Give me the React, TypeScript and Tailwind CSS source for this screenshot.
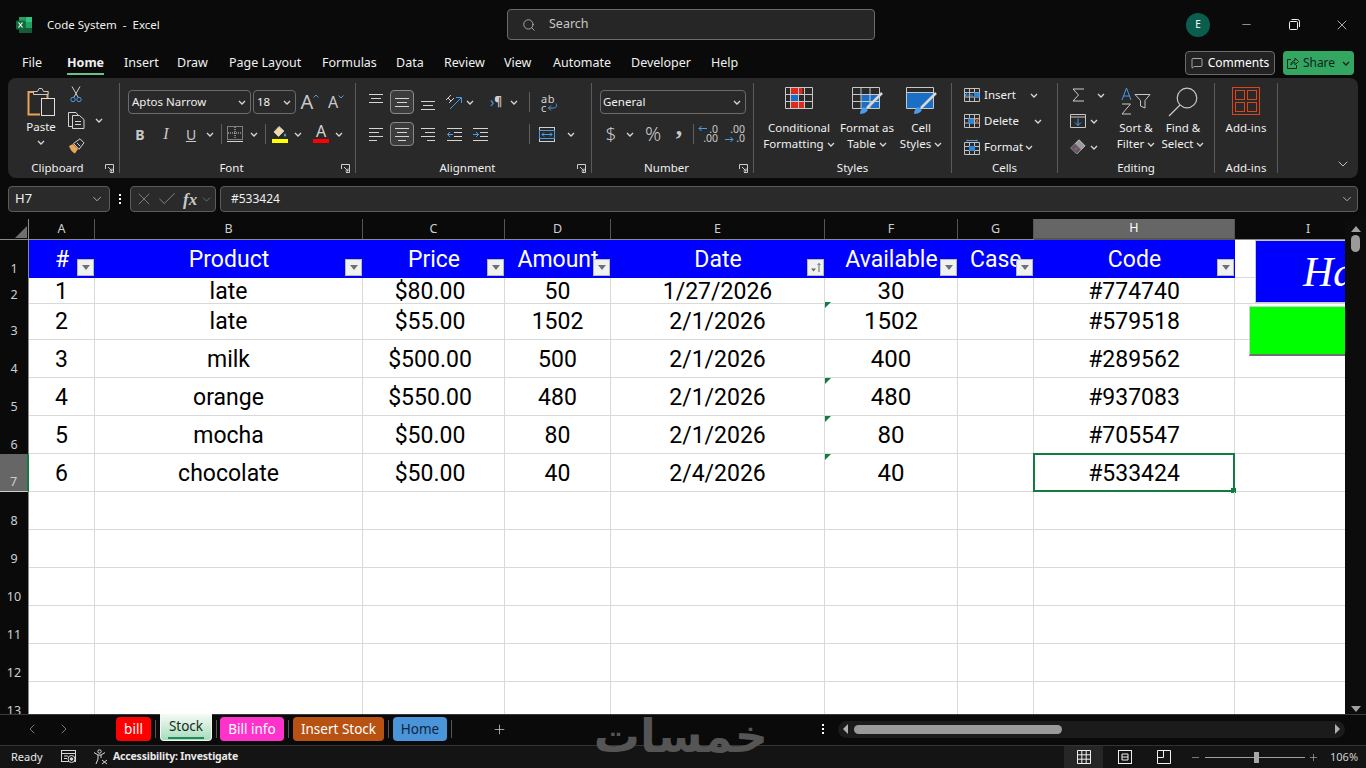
import React from 'react';
import { Search, Minus, X, Plus, ChevronLeft, ChevronRight, ChevronDown, MessageSquare, Check } from 'lucide-react';

const Chev = ({ className = 'text-[#d8d8d8]' }: { className?: string }) => (
  <svg width="8" height="5" viewBox="0 0 8 5" className={className} fill="none" stroke="currentColor" strokeWidth="1.3">
    <path d="M1 1l3 3 3-3" />
  </svg>
);

const Slot = ({ w, children, className = '' }: { w: string; children?: React.ReactNode; className?: string }) => (
  <div className={`${w} h-6 flex-none flex items-center justify-center ${className}`}>{children}</div>
);

const Sep = () => <div className="w-px h-[20px] bg-[#5f5f5f]" />;
const GroupDivider = () => <div className="w-px my-[5px] bg-[#5a5a5a] flex-none" />;

const Launcher = () => (
  <svg width="9" height="9" viewBox="0 0 9 9" fill="none" stroke="#cfcfcf" className="absolute right-[5px] bottom-[5px]">
    <path d="M.5 5V.5H8.5V8.5H5M3 3l4 4M7 4.5V7H4.5" />
  </svg>
);

const Group = ({ w, label, launcher, children }: { w: string; label: string; launcher?: boolean; children: React.ReactNode }) => (
  <div className={`${w} relative flex-none flex flex-col h-full`}>
    <div className="h-[80px] flex-none">{children}</div>
    <div className={`h-[20px] flex items-center justify-center text-[11.5px] text-[#f0f0f0] ${launcher ? 'pr-[12px]' : ''}`}>{label}</div>
    {launcher && <Launcher />}
  </div>
);

const Lines = ({ rows, className = '' }: { rows: [number, number][]; className?: string }) => (
  <svg width="16" height="14" viewBox="0 0 16 14" fill="none" stroke="#d4d4d4" className={className}>
    {rows.map(([a, b], i) => (
      <path key={i} d={`M${a} ${1.5 + i * 4}H${b}`} />
    ))}
  </svg>
);

const ExcelIcon = () => (
  <svg width="16" height="16" viewBox="0 0 16 16">
    <rect x="3" y="0" width="6.5" height="5" fill="#21a366" />
    <rect x="9.5" y="0" width="6.5" height="5" fill="#33c481" />
    <rect x="3" y="5" width="6.5" height="6" fill="#107c41" />
    <rect x="9.5" y="5" width="6.5" height="6" fill="#21a366" />
    <rect x="3" y="11" width="13" height="5" fill="#185c37" />
    <rect x="0" y="3.5" width="9" height="9" rx="1" fill="#0f6b3a" />
    <path d="M2.5 5.5l4 5M6.5 5.5l-4 5" stroke="#fff" strokeWidth="1.2" />
  </svg>
);

const PasteIcon = () => (
  <svg width="28" height="31" viewBox="0 0 28 31" fill="none">
    <path d="M8.5 5H1.5V27.5H13" stroke="#e8a657" strokeWidth="2" />
    <path d="M19 5h1.5V11" stroke="#e8a657" strokeWidth="2" />
    <path d="M6.5 7.5V4.5H10.5L12 1.5H15L16.5 4.5H21V7.5Z" stroke="#c9c9c9" fill="#292929" />
    <rect x="14.5" y="11.5" width="13" height="17" fill="#292929" stroke="#e0e0e0" />
  </svg>
);

const CutIcon = () => (
  <svg width="12" height="17" viewBox="0 0 12 17" fill="none">
    <path d="M2 .5L8 11M10 .5L4 11" stroke="#cfcfcf" />
    <circle cx="3" cy="13.5" r="2.2" stroke="#4a9be8" />
    <circle cx="9" cy="13.5" r="2.2" stroke="#4a9be8" />
  </svg>
);

const CopyIcon = () => (
  <svg width="17" height="17" viewBox="0 0 17 17" fill="none" stroke="#d4d4d4">
    <path d="M5 14.5H.5V.5H8L10 3" />
    <path d="M4.5 3.5H11.5L16 7.5V16.5H4.5Z" fill="#292929" />
    <path d="M7 9.5h6M7 12.5h6" />
  </svg>
);

const BrushIcon = () => (
  <svg width="17" height="16" viewBox="0 0 17 16" fill="none">
    <path d="M1 8l4-2 5 5-3 4.5C4 14.5 2 11 1 8Z" fill="#e8a657" />
    <path d="M5.5 5.5L12 .8l4 4-5 6.5Z" fill="#292929" stroke="#d4d4d4" />
    <path d="M9 5l3 3" stroke="#d4d4d4" />
  </svg>
);

const GrowA = ({ up }: { up?: boolean }) => (
  <div className="relative flex items-end leading-none text-[#c8c8c8]">
    <span className={up ? 'text-[20px] leading-none' : 'text-[16px] leading-none'}>A</span>
    <svg width="6" height="4" viewBox="0 0 6 4" fill="none" stroke="#4a9be8" className={up ? 'mb-[14px]' : 'mb-[11px]'}>
      <path d={up ? 'M.5 3.5L3 1l2.5 2.5' : 'M.5 .5L3 3l2.5-2.5'} />
    </svg>
  </div>
);

const BorderIcon = () => (
  <svg width="16" height="16" viewBox="0 0 16 16" fill="none" stroke="#d4d4d4">
    <path d="M.5 .5H15.5V13.5H.5Z" strokeDasharray="1 1" />
    <path d="M8 1V13M1 7H15" strokeDasharray="1 1" />
    <path d="M0 15.5H16" />
  </svg>
);

const FillIcon = () => (
  <div className="flex flex-col items-center">
    <svg width="14" height="12" viewBox="0 0 14 12" fill="none">
      <path d="M6 .5L1 6l4.5 4.5L11 5Z" fill="#f3d9a4" stroke="#c8c8c8" />
      <path d="M12 7c1 1.5 1.5 2 1 3-.5.8-1.5.8-2 0-.4-1 .3-1.8 1-3Z" fill="#4a9be8" />
    </svg>
    <div className="w-4 h-[4px] mt-[1px] bg-[#ffff00]" />
  </div>
);

const FontColorIcon = () => (
  <div className="flex flex-col items-center">
    <span className="text-[16px] leading-[13px] text-[#d4d4d4]">A</span>
    <div className="w-4 h-[4px] mt-[1px] bg-[#ff0000]" />
  </div>
);

const OrientIcon = () => (
  <svg width="18" height="16" viewBox="0 0 18 16" fill="none">
    <path d="M1 6l5-5M4 9l5-5M3 4l3 3" stroke="#cfcfcf" />
    <path d="M5 15L16 4M11 3.5h5.5V9" stroke="#4a9be8" />
  </svg>
);

const IndentIcon = ({ out }: { out?: boolean }) => (
  <svg width="15" height="13" viewBox="0 0 15 13" fill="none">
    <path d="M7 4.5H15M7 8.5H15" stroke="#d4d4d4" />
    <path d="M0 12.5H15M0 .5H15" stroke="#d4d4d4" />
    <path d={out ? 'M6 6.5H.5M3 4L.5 6.5 3 9' : 'M0 6.5H5.5M3 4l2.5 2.5L3 9'} stroke="#4a9be8" />
  </svg>
);

const RtlIcon = () => (
  <div className="flex items-center text-[14px] leading-none">
    <span className="text-[#4a9be8]">›</span>
    <span className="text-[#cfcfcf] font-bold text-[12px]">¶</span>
  </div>
);

const WrapIcon = () => (
  <div className="relative w-[16px] h-[17px] text-[#d4d4d4] text-[11px] leading-[9px]">
    <div className="tracking-[0.5px]">ab</div>
    <div>c</div>
    <svg width="11" height="8" viewBox="0 0 11 8" fill="none" stroke="#4a9be8" className="absolute right-[-1px] bottom-0">
      <path d="M9 .5C10.5 3 9 5 6.5 5H1.5M4 2.5L1.5 5 4 7.5" />
    </svg>
  </div>
);

const MergeIcon = () => (
  <svg width="16" height="15" viewBox="0 0 16 15" fill="none">
    <rect x=".5" y=".5" width="15" height="14" stroke="#cfcfcf" />
    <rect x=".5" y="3.5" width="15" height="8" stroke="#4a9be8" />
    <path d="M3 7.5H13M5 5.5l-2 2 2 2M11 5.5l2 2-2 2" stroke="#4a9be8" />
  </svg>
);

const DecimalIcon = ({ more }: { more?: boolean }) => (
  <div className="relative w-[20px] h-[18px] text-[#c8c8c8] text-[10.5px] leading-[9px] text-right">
    <div>{more ? '.00' : '.0'}</div>
    <div>{more ? '.0' : '.00'}</div>
    <svg width="9" height="7" viewBox="0 0 9 7" fill="none" stroke="#4a9be8" className={`absolute left-0 ${more ? 'bottom-0' : 'top-0'}`}>
      {more ? <path d="M0 3.5H8M5.5 1L8 3.5 5.5 6" /> : <path d="M9 3.5H1M3.5 1L1 3.5 3.5 6" />}
    </svg>
  </div>
);

const CondIcon = () => (
  <svg width="28" height="23" viewBox="0 0 28 23" fill="none">
    <rect x="5.5" y=".5" width="12" height="7" fill="#dc2a1e" />
    <rect x="5.5" y="7.5" width="8" height="7" fill="#1a6fc4" />
    <rect x="5.5" y="14.5" width="14" height="7" fill="#dc2a1e" />
    <path d="M.5 .5H27.5V21.5H.5ZM.5 7.5H27.5M.5 14.5H27.5M5.5 .5V21.5M13.5 .5V21.5M19.5 .5V21.5" stroke="#c8c8c8" />
  </svg>
);

const TableIcon = () => (
  <svg width="31" height="28" viewBox="0 0 31 28" fill="none">
    <rect x="9" y="8" width="18" height="13" fill="#1a6fc4" />
    <path d="M.5 .5H27.5V21.5H.5ZM.5 7.5H27.5M.5 14.5H27.5M9 .5V21.5M18 .5V21.5" stroke="#c8c8c8" />
    <path d="M30 6L15 21" stroke="#d8d8d8" strokeWidth="2.5" />
    <path d="M8 27c0-4 2-6 4-7l4 3c-2 3-5 4-8 4Z" fill="#4a9be8" />
  </svg>
);

const CellStyleIcon = () => (
  <svg width="31" height="28" viewBox="0 0 31 28" fill="none">
    <rect x="1" y="6" width="26" height="15" fill="#1a6fc4" />
    <path d="M.5 .5H27.5V21.5H.5ZM.5 5.5H27.5" stroke="#c8c8c8" />
    <path d="M30 6L15 21" stroke="#d8d8d8" strokeWidth="2.5" />
    <path d="M8 27c0-4 2-6 4-7l4 3c-2 3-5 4-8 4Z" fill="#4a9be8" />
  </svg>
);

const GridCells = () => <path d="M.5 .5H15.5V13.5H.5ZM.5 4.5H15.5M.5 9H15.5M5.5 .5V13.5M10.5 .5V13.5" stroke="#c0c0c0" />;

const InsertIcon = () => (
  <svg width="16" height="14" viewBox="0 0 16 14" fill="none">
    <GridCells />
    <rect x="10" y="4.5" width="5.5" height="5" fill="#2a86d8" />
    <path d="M9 7H1M3.5 4.5L1 7l2.5 2.5" stroke="#4a9be8" />
  </svg>
);

const DeleteIcon = () => (
  <svg width="16" height="14" viewBox="0 0 16 14" fill="none">
    <GridCells />
    <rect x="4" y="4.5" width="6" height="5" fill="#2a86d8" />
    <path d="M11 4.5l4 5M15 4.5l-4 5" stroke="#d0602c" strokeWidth="1.2" />
  </svg>
);

const FormatIcon = () => (
  <svg width="16" height="16" viewBox="0 0 16 16" fill="none">
    <path d="M.5 3.5H15.5V15.5H.5ZM.5 7.5H15.5M.5 11.5H15.5M5.5 3.5V15.5M10.5 3.5V15.5" stroke="#c0c0c0" />
    <rect x="5" y="7" width="6" height="5" fill="#2a86d8" />
    <path d="M3 .5V2.5M13 .5V2.5M3 1.5H13" stroke="#4a9be8" />
  </svg>
);

const SigmaIcon = () => (
  <svg width="13" height="14" viewBox="0 0 13 14" fill="none" stroke="#cfcfcf">
    <path d="M12 1H1l5.5 6L1 13h11" />
  </svg>
);

const FillDownIcon = () => (
  <svg width="16" height="14" viewBox="0 0 16 14" fill="none">
    <path d="M.5 .5H15.5V13.5H.5ZM.5 3H15.5" stroke="#c8c8c8" />
    <path d="M8 4.5V11.5M5 8.5l3 3 3-3" stroke="#4a9be8" />
  </svg>
);

const ClearIcon = () => (
  <svg width="16" height="16" viewBox="0 0 16 16" fill="none">
    <path d="M.8 9L9 .8 15 6.8 6.8 15Z" fill="#9a9a9a" stroke="#c8c8c8" />
    <path d="M.8 9L5 4.8 11 10.8 6.8 15Z" fill="#5c5c5c" />
    <circle cx="6" cy="10" r="1.4" fill="#c23ea0" />
  </svg>
);

const SortIcon = () => (
  <svg width="30" height="28" viewBox="0 0 30 28" fill="none">
    <path d="M14 7.5H29L24 13.5V21L19.5 19V13.5Z" stroke="#c8c8c8" />
    <path d="M1 13L5.5 1 10 13M2.5 9H8.5" stroke="#4a9be8" />
    <path d="M1 17H9.5L1 27H10" stroke="#c8c8c8" />
  </svg>
);

const FindIcon = () => (
  <svg width="30" height="30" viewBox="0 0 30 30" fill="none" stroke="#c8c8c8" strokeWidth="1.2">
    <circle cx="19" cy="11" r="9.8" />
    <path d="M12 18L1 29" />
  </svg>
);

const AddinsIcon = () => (
  <svg width="28" height="28" viewBox="0 0 28 28" fill="none" stroke="#d8451f">
    <rect x=".5" y=".5" width="27" height="27" />
    <rect x="3.5" y="3.5" width="9" height="9" />
    <rect x="15.5" y="3.5" width="9" height="9" />
    <rect x="3.5" y="15.5" width="9" height="9" />
    <rect x="15.5" y="15.5" width="9" height="9" />
  </svg>
);

const SmallRow = ({ children }: { children: React.ReactNode }) => <div className="h-[26px] flex items-center text-[11.5px] text-[#f0f0f0]">{children}</div>;

const BigButton = ({ w, icon, lines }: { w: string; icon: React.ReactNode; lines: React.ReactNode[] }) => (
  <div className={`${w} flex-none flex flex-col items-center text-[11.5px] leading-[16px] text-[#f0f0f0]`}>
    <div className="h-[31px] mt-[9px] flex items-start justify-center">{icon}</div>
    <div className="mt-[2px] flex flex-col items-center whitespace-nowrap">
      {lines.map((l, i) => (
        <div key={i} className="flex items-center gap-[3px]">{l}</div>
      ))}
    </div>
  </div>
);

const Ribbon = () => (
  <div className="mx-2 h-[100px] flex-none flex rounded-lg bg-[#292929]">
    <Group w="w-[111px]" label="Clipboard" launcher>
      <div className="flex pl-3">
        <div className="w-[42px] flex flex-col items-center text-[11.5px] text-[#f0f0f0]">
          <div className="mt-[9px] h-[31px]"><PasteIcon /></div>
          <div className="leading-[16px] mt-[1px]">Paste</div>
          <div className="mt-[5px]"><Chev /></div>
        </div>
        <div className="ml-1 mt-[3px] flex flex-col">
          <SmallRow><Slot w="w-5"><CutIcon /></Slot></SmallRow>
          <SmallRow><Slot w="w-5"><CopyIcon /></Slot><Slot w="w-[26px]"><Chev /></Slot></SmallRow>
          <SmallRow><Slot w="w-5"><BrushIcon /></Slot></SmallRow>
        </div>
      </div>
    </Group>
    <GroupDivider />
    <Group w="w-[235px]" label="Font" launcher>
      <div className="pl-2 pt-3 flex flex-col gap-2">
        <div className="flex items-center gap-[2px]">
          <div className="w-[123px] h-6 flex items-center justify-between px-[3px] pr-[4px] rounded border border-[#6b6b6b] text-[11.5px] text-[#f0f0f0]">
            <span>Aptos Narrow</span><Chev />
          </div>
          <div className="w-[43px] h-6 flex items-center justify-between px-[3px] pr-[4px] rounded border border-[#6b6b6b] text-[11.5px] text-[#f0f0f0]">
            <span>18</span><Chev />
          </div>
          <Slot w="w-6"><GrowA up /></Slot>
          <Slot w="w-6"><GrowA /></Slot>
        </div>
        <div className="flex items-center">
          <Slot w="w-6"><span className="text-[14px] font-bold text-[#c8c8c8]">B</span></Slot>
          <Slot w="w-7"><span className="text-[16px] italic text-[#c8c8c8] font-['Liberation_Serif',serif]">I</span></Slot>
          <Slot w="w-[22px]"><span className="text-[14px] underline text-[#c8c8c8]">U</span></Slot>
          <Slot w="w-4"><Chev /></Slot>
          <Slot w="w-[6px]"><Sep /></Slot>
          <Slot w="w-[22px]"><BorderIcon /></Slot>
          <Slot w="w-4"><Chev /></Slot>
          <Slot w="w-[6px]"><Sep /></Slot>
          <Slot w="w-6"><FillIcon /></Slot>
          <Slot w="w-3"><Chev /></Slot>
          <Slot w="w-[6px]" />
          <Slot w="w-[22px]"><FontColorIcon /></Slot>
          <Slot w="w-[14px]"><Chev /></Slot>
        </div>
      </div>
    </Group>
    <GroupDivider />
    <Group w="w-[235px]" label="Alignment" launcher>
      <div className="pl-[10px] pt-3 flex flex-col gap-2">
        <div className="flex items-center">
          <Slot w="w-5"><Lines rows={[[1, 15], [3, 13], [1, 15]]} className="-translate-y-[2px]" /></Slot>
          <Slot w="w-1" />
          <Slot w="w-6" className="rounded border border-[#8a8a8a] bg-[#3c3c3c]"><Lines rows={[[1, 15], [3, 13], [1, 15]]} className="translate-y-[2px]" /></Slot>
          <Slot w="w-7"><Lines rows={[[1, 15], [3, 13], [1, 15]]} className="translate-y-[5px]" /></Slot>
          <Slot w="w-6"><OrientIcon /></Slot>
          <Slot w="w-2"><Chev /></Slot>
          <Slot w="w-[10px]" />
          <Slot w="w-6"><RtlIcon /></Slot>
          <Slot w="w-3"><Chev /></Slot>
          <Slot w="w-[18px]"><Sep /></Slot>
          <Slot w="w-[22px]"><WrapIcon /></Slot>
        </div>
        <div className="flex items-center">
          <Slot w="w-5"><Lines rows={[[1, 15], [1, 11], [1, 15], [1, 9]]} /></Slot>
          <Slot w="w-1" />
          <Slot w="w-6" className="rounded border border-[#8a8a8a] bg-[#3c3c3c]"><Lines rows={[[1, 15], [3, 13], [1, 15], [4, 12]]} /></Slot>
          <Slot w="w-7"><Lines rows={[[1, 15], [5, 15], [1, 15], [7, 15]]} /></Slot>
          <Slot w="w-6"><IndentIcon out /></Slot>
          <Slot w="w-[2px]" />
          <Slot w="w-6"><IndentIcon /></Slot>
          <Slot w="w-7" />
          <Slot w="w-[18px]"><Sep /></Slot>
          <Slot w="w-[18px]"><MergeIcon /></Slot>
          <Slot w="w-2" />
          <Slot w="w-[14px]"><Chev /></Slot>
        </div>
      </div>
    </Group>
    <GroupDivider />
    <Group w="w-[161px]" label="Number" launcher>
      <div className="pl-2 pt-3 flex flex-col gap-2">
        <div className="w-[146px] h-6 flex items-center justify-between px-[2px] pr-[4px] rounded border border-[#6b6b6b] text-[11.5px] text-[#f0f0f0]">
          <span>General</span><Chev />
        </div>
        <div className="flex items-center text-[#c8c8c8]">
          <Slot w="w-[22px]"><span className="text-[19px] font-light">$</span></Slot>
          <Slot w="w-4"><Chev /></Slot>
          <Slot w="w-[30px]"><span className="text-[20px] font-light">%</span></Slot>
          <Slot w="w-[22px]"><span className="text-[26px] font-bold leading-none -mt-[14px] font-['Liberation_Serif',serif]">,</span></Slot>
          <Slot w="w-[6px]"><Sep /></Slot>
          <Slot w="w-6"><DecimalIcon /></Slot>
          <Slot w="w-[3px]" />
          <Slot w="w-6"><DecimalIcon more /></Slot>
        </div>
      </div>
    </Group>
    <GroupDivider />
    <Group w="w-[197px]" label="Styles">
      <div className="pl-3 flex">
        <BigButton w="w-[66px]" icon={<CondIcon />} lines={['Conditional', <>Formatting <Chev /></>]} />
        <div className="w-[2px]" />
        <BigButton w="w-[66px]" icon={<TableIcon />} lines={['Format as', <>Table <Chev /></>]} />
        <BigButton w="w-[42px]" icon={<CellStyleIcon />} lines={['Cell', <>Styles <Chev /></>]} />
      </div>
    </Group>
    <GroupDivider />
    <Group w="w-[105px]" label="Cells">
      <div className="pl-3 pt-1">
        <SmallRow><InsertIcon /><span className="ml-1 w-[46px]">Insert</span><Chev /></SmallRow>
        <SmallRow><DeleteIcon /><span className="ml-1 w-[50px]">Delete</span><Chev /></SmallRow>
        <SmallRow><FormatIcon /><span className="ml-1 w-[41px]">Format</span><Chev /></SmallRow>
      </div>
    </Group>
    <GroupDivider />
    <Group w="w-[156px]" label="Editing">
      <div className="pl-[10px] flex">
        <div className="pt-1 w-11 flex-none">
          <SmallRow><Slot w="w-5"><SigmaIcon /></Slot><Slot w="w-[26px]"><Chev /></Slot></SmallRow>
          <SmallRow><Slot w="w-5"><FillDownIcon /></Slot><Slot w="w-3"><Chev /></Slot></SmallRow>
          <SmallRow><Slot w="w-5"><ClearIcon /></Slot><Slot w="w-3"><Chev /></Slot></SmallRow>
        </div>
        <BigButton w="w-12" icon={<SortIcon />} lines={['Sort &', <>Filter <Chev /></>]} />
        <BigButton w="w-[46px]" icon={<FindIcon />} lines={['Find &', <>Select <Chev /></>]} />
      </div>
    </Group>
    <GroupDivider />
    <Group w="w-[62px]" label="Add-ins">
      <BigButton w="w-full" icon={<AddinsIcon />} lines={['Add-ins']} />
    </Group>
    <GroupDivider />
    <div className="flex-1 flex justify-end items-end pr-[7px] pb-[6px]">
      <ChevronDown size={16} strokeWidth={1.3} className="text-[#d8d8d8]" />
    </div>
  </div>
);

const FormulaBar = () => (
  <div className="mt-2 mx-2 h-[26px] flex-none flex items-center text-[12px] text-[#f0f0f0]">
    <div className="w-[102px] h-full flex items-center justify-between pl-[6px] pr-[5px] rounded border border-[#5c5c5c] bg-[#2a2a2a]">
      <span className="text-[13px]">H7</span>
      <ChevronDown size={14} strokeWidth={1.4} className="text-[#c8c8c8]" />
    </div>
    <div className="w-5 flex flex-col items-center gap-[2px]">
      <div className="w-[2px] h-[2px] bg-white" />
      <div className="w-[2px] h-[2px] bg-white" />
      <div className="w-[2px] h-[2px] bg-white" />
    </div>
    <div className="w-[86px] h-full flex items-center pl-[3px] rounded border border-[#5c5c5c] bg-[#2a2a2a] text-[#8c8c8c]">
      <X size={20} strokeWidth={1} />
      <Check size={22} strokeWidth={1} className="ml-[2px]" />
      <span className="ml-[5px] w-[16px] italic font-bold text-[17px] leading-none text-[#c8c8c8] font-['Liberation_Serif',serif]">fx</span>
      <ChevronDown size={13} strokeWidth={1.2} className="ml-[1px]" />
    </div>
    <div className="ml-1 flex-1 h-full flex items-center justify-between pl-[10px] pr-[3px] rounded border border-[#5c5c5c] bg-[#2a2a2a]">
      <span>#533424</span>
      <ChevronDown size={14} strokeWidth={1.4} className="text-[#c8c8c8]" />
    </div>
  </div>
);

const colGrid = 'grid grid-cols-[29px_66px_268px_142px_106px_214px_133px_76px_201px_110px]';
const cols = ['A', 'B', 'C', 'D', 'E', 'F', 'G', 'H', 'I'];
const headers = ['#', 'Product', 'Price', 'Amount', 'Date', 'Available', 'Case', 'Code'];

const rows = [
  { n: 2, h: 'h-[24px]', c: ['1', 'late', '$80.00', '50', '1/27/2026', '30', '', '#774740'] },
  { n: 3, h: 'h-[38px]', c: ['2', 'late', '$55.00', '1502', '2/1/2026', '1502', '', '#579518'], flag: true },
  { n: 4, h: 'h-[38px]', c: ['3', 'milk', '$500.00', '500', '2/1/2026', '400', '', '#289562'] },
  { n: 5, h: 'h-[38px]', c: ['4', 'orange', '$550.00', '480', '2/1/2026', '480', '', '#937083'], flag: true },
  { n: 6, h: 'h-[38px]', c: ['5', 'mocha', '$50.00', '80', '2/1/2026', '80', '', '#705547'], flag: true },
  { n: 7, h: 'h-[38px]', c: ['6', 'chocolate', '$50.00', '40', '2/4/2026', '40', '', '#533424'], flag: true, active: true },
  { n: 8, h: 'h-[38px]', c: ['', '', '', '', '', '', '', ''] },
  { n: 9, h: 'h-[38px]', c: ['', '', '', '', '', '', '', ''] },
  { n: 10, h: 'h-[38px]', c: ['', '', '', '', '', '', '', ''] },
  { n: 11, h: 'h-[38px]', c: ['', '', '', '', '', '', '', ''] },
  { n: 12, h: 'h-[38px]', c: ['', '', '', '', '', '', '', ''] },
  { n: 13, h: 'h-[38px]', c: ['', '', '', '', '', '', '', ''] },
];

const FilterButton = ({ sorted }: { sorted?: boolean }) => (
  <div className="absolute right-[1px] bottom-[2px] w-[17px] h-[17px] flex items-center justify-center bg-[#f0f2f2] border border-[#b8b8b8]">
    {sorted ? (
      <svg width="13" height="11" viewBox="0 0 13 11" fill="none">
        <path d="M2 6.5h5l-2.5 3Z" fill="#666" />
        <path d="M10 10V1.5M8.5 3L10 1.5 11.5 3" stroke="#666" />
      </svg>
    ) : (
      <div className="w-0 h-0 border-x-[4px] border-x-transparent border-t-[5px] border-t-[#707070]" />
    )}
  </div>
);

const Sheet = () => (
  <div className="h-[495px] flex-none mt-[7px] flex">
    <div className="relative w-[1345px] flex-none overflow-hidden bg-white font-['Roboto',sans-serif]">
      <div className={`${colGrid} h-[21px] bg-[#0a0a0a] text-[12.5px] font-['Noto_Sans',sans-serif] text-[#cfcfcf] border-b border-[#8a8a8a]`}>
        <div className="relative border-r border-[#8a8a8a]">
          <div className="absolute right-[1px] bottom-[1px] w-0 h-0 border-l-[12px] border-l-transparent border-b-[12px] border-b-[#6e6e6e]" />
        </div>
        {cols.map((c) => (
          <div
            key={c}
            className={`flex items-center justify-center ${c === 'H' ? 'bg-[#666666] text-white border-b-2 border-[#107c41] -mb-px' : ''} ${c === 'I' ? 'pl-[36px]' : 'border-r border-[#555555]'}`}
          >
            {c}
          </div>
        ))}
      </div>
      <div className={`${colGrid} h-[38px]`}>
        <div className="flex items-end justify-center bg-[#0a0a0a] border-r border-[#8a8a8a] text-[12.5px] leading-[19px] text-[#cfcfcf] font-['Noto_Sans',sans-serif]">1</div>
        {headers.map((h, i) => (
          <div key={h} className={`relative flex items-center justify-center pt-px bg-[#0000ff] text-white text-[23px] leading-none whitespace-nowrap ${h === 'Case' ? 'justify-start pl-[12px]' : ''}`}>
            {h}
            <FilterButton sorted={i === 4} />
          </div>
        ))}
        <div className="border-b border-[#d9d9d9]" />
      </div>
      {rows.map((r) => (
        <div key={r.n} className={`${colGrid} ${r.h}`}>
          <div
            className={`flex items-end justify-center text-[12.5px] leading-[19px] text-[#cfcfcf] font-['Noto_Sans',sans-serif] ${
              r.active ? 'bg-[#666666] border-r-2 border-[#107c41] border-b border-b-[#cfcfcf]' : 'bg-[#0a0a0a] border-r border-[#8a8a8a]'
            }`}
          >
            {r.n}
          </div>
          {r.c.map((t, i) => (
            <div
              key={i}
              className={`relative flex items-center justify-center leading-none text-black border-r border-b border-[#d9d9d9] ${i === 5 ? 'text-[24px]' : 'text-[23px] pt-[2px]'} ${i === 2 ? 'pr-[7px]' : ''}`}
            >
              {t}
              {i === 5 && r.flag && (
                <div className="absolute left-0 top-0 w-0 h-0 border-t-[6px] border-t-[#107c41] border-r-[6px] border-r-transparent" />
              )}
              {i === 7 && r.active && (
                <div className="absolute -left-px -top-px -right-px -bottom-px border-2 border-[#107c41]">
                  <div className="absolute -right-[3px] -bottom-[3px] w-[5px] h-[5px] bg-[#107c41]" />
                </div>
              )}
            </div>
          ))}
          <div className="border-b border-[#d9d9d9]" />
        </div>
      ))}
      <div className="absolute left-[1255px] top-[21px] w-[95px] h-[63px] flex items-center overflow-hidden bg-[#0000ff] border border-[#c8c8c8] pl-[47px]">
        <span className="text-[42px] leading-none italic text-white font-['Liberation_Serif',serif] whitespace-nowrap">Hala</span>
      </div>
      <div className="absolute left-[1249px] top-[87px] w-[100px] h-[50px] bg-[#00ff00] border border-[#d0d0d0] border-b-2 border-b-[#707070]" />
    </div>
    <div className="flex-1 relative flex flex-col items-center bg-[#0c0c0c]">
      <div className="mt-[7px] w-0 h-0 border-x-[5px] border-x-transparent border-b-[6px] border-b-[#a0a0a0]" />
      <div className="mt-[3px] w-[9px] h-[17px] rounded-full bg-[#9a9a9a]" />
      <div className="mt-auto mb-[2px] w-0 h-0 border-x-[5px] border-x-transparent border-t-[6px] border-t-[#a0a0a0]" />
    </div>
  </div>
);

const tabs = [
  { label: 'bill', w: 'w-[35px]', cls: 'bg-[#ff0000] text-white' },
  { label: 'Bill info', w: 'w-[64px]', cls: 'bg-[#ff33cc] text-white' },
  { label: 'Insert Stock', w: 'w-[91px]', cls: 'bg-[#b85212] text-white' },
  { label: 'Home', w: 'w-[54px]', cls: 'bg-[#4a94da] text-[#10243a]' },
];

const TabSep = () => <div className="w-px h-[18px] mx-1 bg-[#555555]" />;

const TabBar = () => (
  <div className="h-[31px] flex-none flex items-center pb-[2px] bg-[#0a0a0a] border-t border-[#3a3a3a] text-[13.5px] font-['Noto_Sans',sans-serif]">
    <div className="w-[116px] flex-none flex text-[#8a8a8a]">
      <ChevronLeft size={16} strokeWidth={1.3} className="ml-[24px]" />
      <ChevronRight size={16} strokeWidth={1.3} className="ml-[16px]" />
    </div>
    <div className={`${tabs[0].w} h-6 flex items-center justify-center rounded ${tabs[0].cls}`}>{tabs[0].label}</div>
    <TabSep />
    <div className="w-[52px] h-[27px] -mt-[3px] pt-[2px] flex flex-col items-center rounded-b border border-t-0 border-[#f4f4f4] bg-gradient-to-b from-[#f4fbf6] to-[#a6dcbb] text-[#1a2a20]">
      <span className="leading-[21px]">Stock</span>
      <div className="w-[36px] h-[2px] bg-[#1f8a55]" />
    </div>
    <div className="w-px h-[18px] ml-1 mr-[3px] bg-[#555555]" />
    <div className={`${tabs[1].w} h-6 flex items-center justify-center rounded ${tabs[1].cls}`}>{tabs[1].label}</div>
    <TabSep />
    <div className={`${tabs[2].w} h-6 flex items-center justify-center rounded ${tabs[2].cls}`}>{tabs[2].label}</div>
    <TabSep />
    <div className={`${tabs[3].w} h-6 flex items-center justify-center rounded ${tabs[3].cls}`}>{tabs[3].label}</div>
    <TabSep />
    <Plus size={15} strokeWidth={1.2} className="ml-[36px] text-[#d0d0d0]" />
    <div className="ml-[315px] flex flex-col gap-[2px]">
      <div className="w-[2px] h-[2px] bg-white" />
      <div className="w-[2px] h-[2px] bg-white" />
      <div className="w-[2px] h-[2px] bg-white" />
    </div>
    <div className="ml-[14px] w-[507px] h-[17px] flex items-center rounded-full bg-[#1b1b1b] px-[5px]">
      <div className="w-0 h-0 border-y-[5px] border-y-transparent border-r-[5px] border-r-[#b0b0b0]" />
      <div className="ml-[6px] w-[208px] h-[9px] rounded-full bg-[#9a9a9a]" />
      <div className="ml-auto w-0 h-0 border-y-[5px] border-y-transparent border-l-[5px] border-l-[#b0b0b0]" />
    </div>
  </div>
);

const StatusBar = () => (
  <div className="h-[23px] flex-none flex items-center bg-[#141414] border-t border-[#333333] text-[11px] text-[#e8e8e8] font-['Noto_Sans',sans-serif]">
    <span className="ml-[11px] w-[50px]">Ready</span>
    <svg width="15" height="14" viewBox="0 0 15 14" fill="none" stroke="#d8d8d8">
      <rect x=".5" y=".5" width="14" height="11" />
      <path d="M.5 3.5H14.5M3 6h4M3 8.5h3" />
      <circle cx="10.5" cy="9" r="3.5" fill="#141414" />
      <circle cx="10.5" cy="9" r="1.3" fill="#d8d8d8" />
    </svg>
    <svg width="15" height="16" viewBox="0 0 15 16" fill="none" stroke="#d8d8d8" className="ml-[17px]">
      <circle cx="6.5" cy="2.5" r="1.7" />
      <path d="M1 3.5l4 2.5H8l4-2.5M5 6v4L3 15M8 6v3M9 11l5 4M14 11l-5 4" />
    </svg>
    <span className="ml-[5px] font-bold text-[10.5px] tracking-[-0.2px]">Accessibility: Investigate</span>
    <div className="ml-auto flex items-center h-full">
      <div className="w-[39px] h-full flex items-center justify-center bg-[#262626]">
        <svg width="14" height="14" viewBox="0 0 14 14" fill="none" stroke="#f0f0f0">
          <path d="M.5 .5H13.5V13.5H.5ZM.5 4.8H13.5M.5 9.2H13.5M4.8 .5V13.5M9.2 .5V13.5" />
        </svg>
      </div>
      <div className="w-[43px] flex items-center justify-center">
        <svg width="14" height="14" viewBox="0 0 14 14" fill="none" stroke="#f0f0f0">
          <rect x=".5" y=".5" width="13" height="13" />
          <path d="M4 4H10V10H4ZM4 7H10" />
        </svg>
      </div>
      <div className="w-[36px] flex items-center justify-center">
        <svg width="14" height="14" viewBox="0 0 14 14" fill="none" stroke="#f0f0f0">
          <path d="M.5 .5H13.5V13.5H.5ZM.5 7.5H6.5V.5" />
        </svg>
      </div>
      <Minus size={11} strokeWidth={1.2} className="ml-[8px] text-[#d0d0d0]" />
      <div className="relative ml-1 w-[100px] h-px bg-[#a0a0a0]">
        <div className="absolute left-[49px] -top-[5px] w-[5px] h-[11px] bg-[#a8a8a8]" />
      </div>
      <Plus size={11} strokeWidth={1.2} className="ml-[3px] text-[#d0d0d0]" />
      <span className="ml-[11px] w-[36px] text-[#d0d0d0]">106%</span>
    </div>
  </div>
);

const menu = [
  ['File', 'w-[45px] ml-[22px]'],
  ['Home', 'w-[57px] font-bold'],
  ['Insert', 'w-[53px]'],
  ['Draw', 'w-[52px]'],
  ['Page Layout', 'w-[93px]'],
  ['Formulas', 'w-[74px]'],
  ['Data', 'w-[48px]'],
  ['Review', 'w-[60px]'],
  ['View', 'w-[49px]'],
  ['Automate', 'w-[78px]'],
  ['Developer', 'w-[80px]'],
  ['Help', 'w-[40px]'],
];

export default function App() {
  return (
    <div className="relative w-[1366px] h-[768px] flex flex-col overflow-hidden bg-[#0a0a0a] text-white font-['Noto_Sans',sans-serif]">
      <div className="h-[48px] flex-none flex items-center pt-px">
        <div className="ml-4"><ExcelIcon /></div>
        <span className="ml-[15px] w-[460px] text-[11.5px] whitespace-pre text-[#f0f0f0]">Code System  -  Excel</span>
        <div className="w-[368px] h-[31px] flex items-center rounded border border-[#6b6b6b] bg-[#262626] text-[12.5px] text-[#c8c8c8]">
          <Search size={14} strokeWidth={1.3} className="ml-[14px]" />
          <span className="ml-[13px]">Search</span>
        </div>
        <div className="ml-auto flex items-center">
          <div className="w-6 h-6 rounded-full bg-[#0b5d4e] flex items-center justify-center text-[10px] text-white">E</div>
          <Minus size={13} strokeWidth={1} className="ml-[30px]" />
          <svg width="11" height="11" viewBox="0 0 11 11" fill="none" stroke="#f0f0f0" className="ml-[36px]">
            <rect x=".5" y="2.5" width="8" height="8" rx="1" />
            <path d="M2.5 .5H8.5a2 2 0 0 1 2 2V8" />
          </svg>
          <X size={16} strokeWidth={1} className="ml-[34px] mr-[16px]" />
        </div>
      </div>
      <div className="h-[30px] flex-none flex items-start text-[12.5px]">
        <div className="flex pt-[6px]">
          {menu.map(([label, cls]) => (
            <div key={label} className={`relative flex-none leading-[18px] whitespace-nowrap text-[#f0f0f0] ${cls}`}>
              {label}
              {label === 'Home' && <div className="absolute left-0 top-[19px] w-[37px] h-[2px] bg-[#6bbf8e]" />}
            </div>
          ))}
        </div>
        <div className="ml-auto mr-3 mt-[3px] flex items-center text-[12px]">
          <div className="w-[90px] h-6 flex items-center justify-center gap-[5px] rounded border border-[#6b6b6b] bg-[#222222]">
            <MessageSquare size={12} strokeWidth={1.2} />
            <span>Comments</span>
          </div>
          <div className="ml-2 w-[71px] h-6 flex items-center justify-center gap-1 rounded bg-[#33a661] text-[#10241a]">
            <svg width="12" height="12" viewBox="0 0 12 12" fill="none" stroke="#10241a">
              <path d="M4 2.5H.5V11.5H9.5V8M4 8c0-3 2-4.5 4-4.5V1l3.5 3.5L8 8V5.5C6 5.5 5 6.5 4 8Z" />
            </svg>
            <span>Share</span>
            <Chev className="text-[#10241a] ml-[3px]" />
          </div>
        </div>
      </div>
      <Ribbon />
      <FormulaBar />
      <Sheet />
      <TabBar />
      <StatusBar />
      <div
        dir="rtl"
        className="absolute left-[602px] top-[708px] w-[166px] text-center text-[46px] leading-[56px] font-bold text-[#555555] font-['DejaVu_Sans',sans-serif] whitespace-nowrap"
      >
        خمسات
      </div>
    </div>
  );
}
